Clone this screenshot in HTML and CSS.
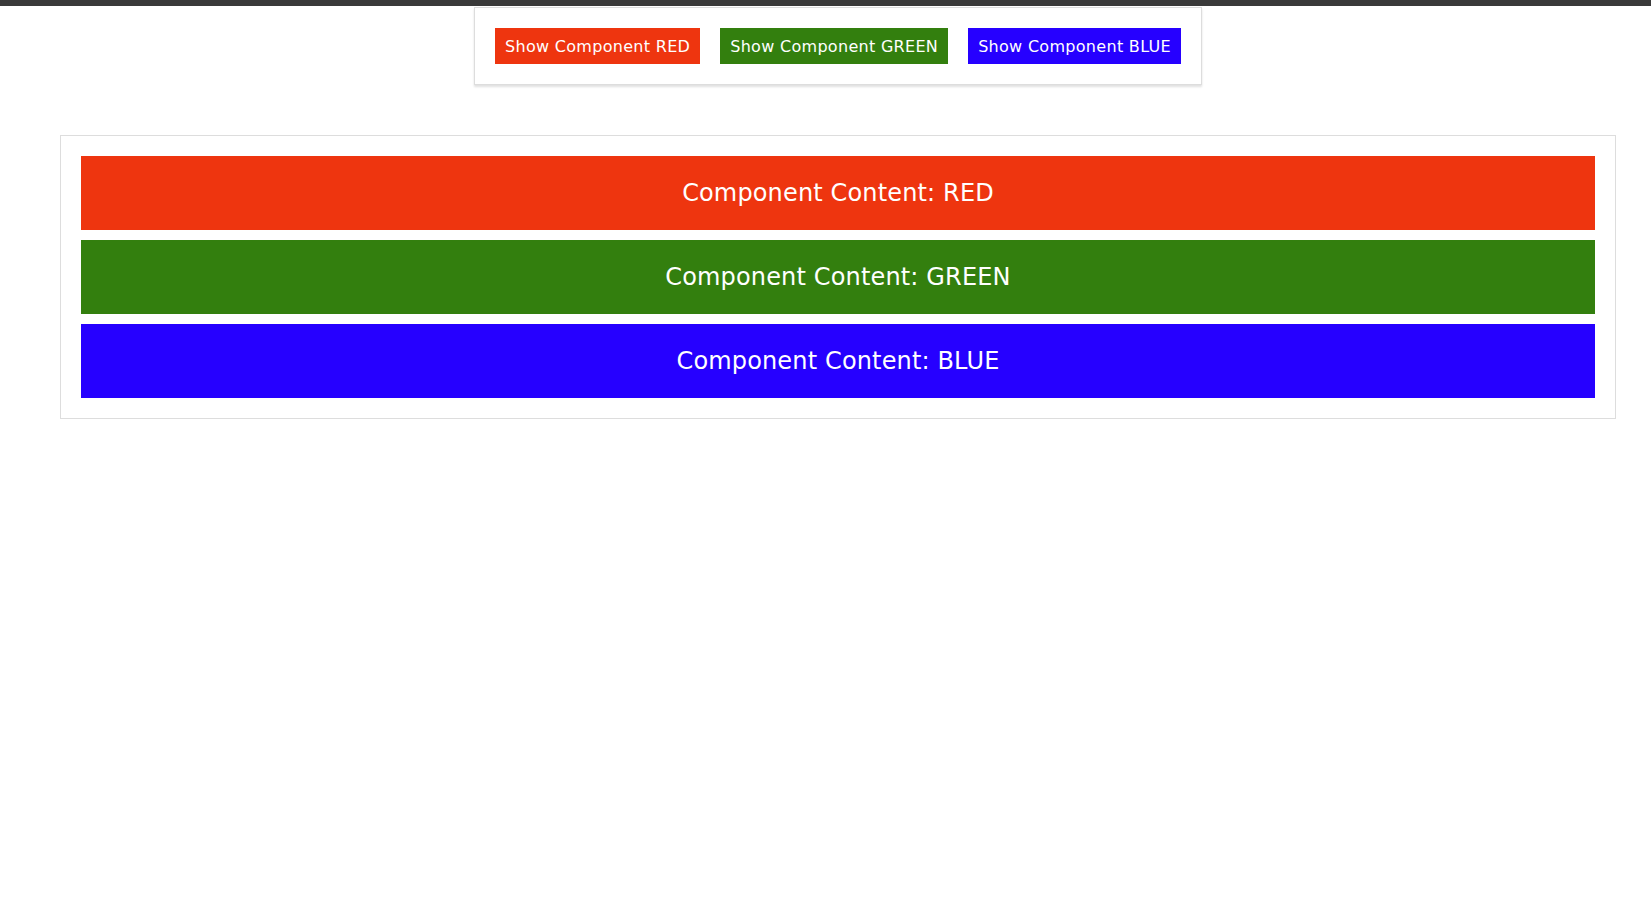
FILE: index.html
```html
<!DOCTYPE html>
<html>
<head>
<meta charset="utf-8">
<link rel="stylesheet" href="styles.css">
</head>
<body>
<div class="topbar"></div>
<div class="page">
  <div class="toolbar">
    <button class="btn red">Show Component RED</button>
    <button class="btn green">Show Component GREEN</button>
    <button class="btn blue">Show Component BLUE</button>
  </div>
  <div class="content">
    <div class="panel red">Component Content: RED</div>
    <div class="panel green">Component Content: GREEN</div>
    <div class="panel blue">Component Content: BLUE</div>
  </div>
</div>
</body>
</html>
```
FILE: styles.css
```css
* { box-sizing: border-box; }
html, body { margin: 0; padding: 0; background: #fff; }
body { font-family: "DejaVu Sans", "Open Sans", sans-serif; }
.topbar { height: 6px; background: #3a3a3a; }
.page { padding-left: 25px; display: flex; flex-direction: column; align-items: center; }
.toolbar {
  display: flex; gap: 20px; padding: 20px;
  border: 1px solid #ddd;
  box-shadow: 0 2px 2px rgba(0,0,0,0.12);
  margin-top: 1px;
}
.btn {
  height: 36px; padding: 0 10px; border: none; color: #fff;
  font-family: inherit; font-size: 16px; letter-spacing: 0.3px;
}
.red { background: #ee350f; }
.green { background: #337f0e; }
.blue { background: #2600ff; }
.content {
  margin-top: 50px; align-self: stretch; margin-left: 35px; margin-right: 35px;
  border: 1px solid #ddd; padding: 20px;
  display: flex; flex-direction: column; gap: 10px;
}
.panel {
  height: 74px; display: flex; align-items: center; justify-content: center;
  color: #fff; font-size: 24px; letter-spacing: 0.15px;
}
```
